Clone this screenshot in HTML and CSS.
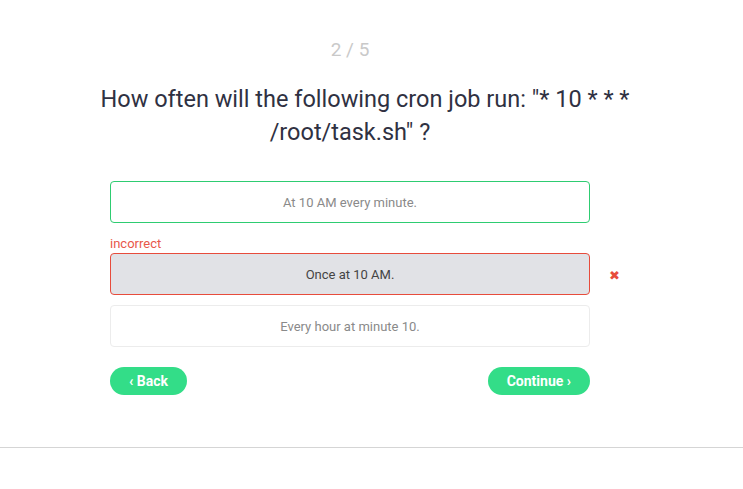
FILE: index.html
```html
<!DOCTYPE html>
<html lang="en">
<head>
  <meta charset="UTF-8" />
  <meta name="viewport" content="width=device-width, initial-scale=1.0"/>
  <title>Quiz</title>
  <link rel="stylesheet" href="styles.css">
</head>
<body>
  <main class="quiz">
    <p class="counter">2 / 5</p>
    <h2 class="question">How often will the following cron job run: "* 10 * * * /root/task.sh" ?</h2>

    <div class="options">
      <div class="option correct">At 10 AM every minute.</div>

      <div class="option-wrap">
        <span class="label-wrong">incorrect</span>
        <div class="option-row">
          <div class="option wrong">Once at 10 AM.</div>
          <span class="mark">&#10006;</span>
        </div>
      </div>

      <div class="option">Every hour at minute 10.</div>
    </div>

    <div class="nav">
      <button class="btn">&#8249; Back</button>
      <button class="btn">Continue &#8250;</button>
    </div>
  </main>

  <hr class="divider">
</body>
</html>
```

FILE: styles.css
```css
body {
  font-family: Roboto, "Liberation Sans", sans-serif;
  margin: 0;
  background-color: white;
}
.quiz {
  width: 560px;
  margin-left: 70px;
  padding-top: 38px;
}
.counter {
  margin: 0;
  text-align: center;
  font-size: 19px;
  color: #c9c9c9;
  line-height: 24px;
}
.question {
  margin: 21px -20px 0 -20px;
  text-align: center;
  text-indent: 30px;
  font-weight: 400;
  font-size: 23.5px;
  line-height: 33px;
  color: #2f3142;
}
.options {
  width: 480px;
  margin: 32px auto 0 auto;
  display: flex;
  flex-direction: column;
  gap: 10px;
}
.option {
  height: 40px;
  border: 1px solid #ececec;
  border-radius: 4px;
  display: flex;
  align-items: center;
  justify-content: center;
  font-size: 13px;
  color: #8a8a8a;
}
.option.correct {
  border-color: #2ecc71;
}
.option-wrap {
  display: flex;
  flex-direction: column;
  gap: 2px;
  margin-top: 3px;
}
.label-wrong {
  font-size: 13px;
  color: #e8584a;
  line-height: 15px;
}
.option-row {
  position: relative;
}
.option.wrong {
  background-color: #e1e2e6;
  border-color: #e74c3c;
  color: #444;
}
.mark {
  position: absolute;
  left: 499px;
  top: 15px;
  color: #e74c3c;
  font-size: 13px;
  font-family: "DejaVu Sans", sans-serif;
}
.nav {
  width: 480px;
  margin: 20px auto 0 auto;
  display: flex;
  justify-content: space-between;
}
.btn {
  height: 28px;
  padding: 0 19px;
  border: none;
  border-radius: 14px;
  background-color: #33dd88;
  color: white;
  font-family: Roboto, sans-serif;
  font-weight: bold;
  font-size: 14px;
  cursor: pointer;
}
.divider {
  margin: 52px 0 0 0;
  border: none;
  border-top: 1px solid #d5d5d5;
}
```
